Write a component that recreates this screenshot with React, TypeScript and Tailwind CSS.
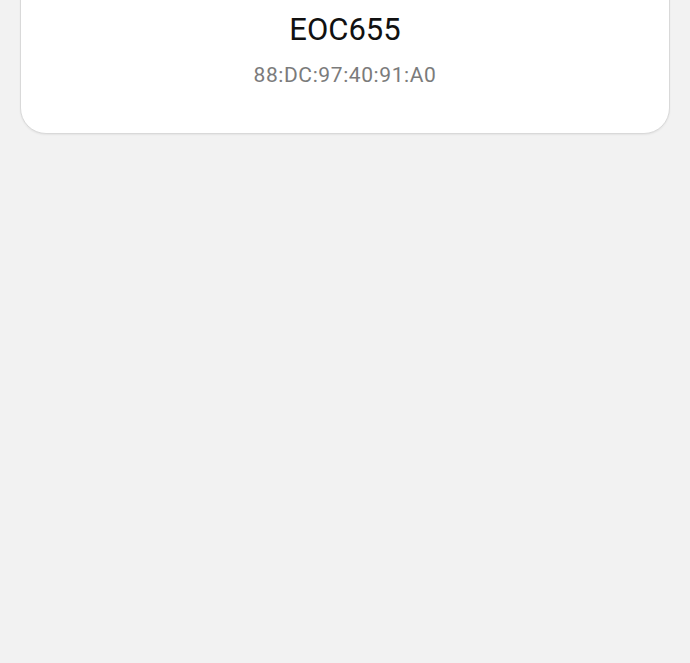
export default function App() {
  return (
    <div
      className="min-h-screen bg-[#f2f2f2] px-[20px] flex flex-col"
      style={{ fontFamily: "Roboto, 'Noto Sans', sans-serif" }}
    >
      <div className="-mt-[40px] rounded-[26px] border border-[#d9d9d9] bg-white pt-[51px] pb-[44px] flex flex-col items-center shadow-[0_1px_2px_rgba(0,0,0,0.06)]">
        <div className="text-[31px] leading-[36px] text-[#111111]">EOC655</div>
        <div className="mt-[13px] text-[21px] leading-[28px] text-[#7b7b7b] tracking-[0.6px]">
          88:DC:97:40:91:A0
        </div>
      </div>
    </div>
  );
}
